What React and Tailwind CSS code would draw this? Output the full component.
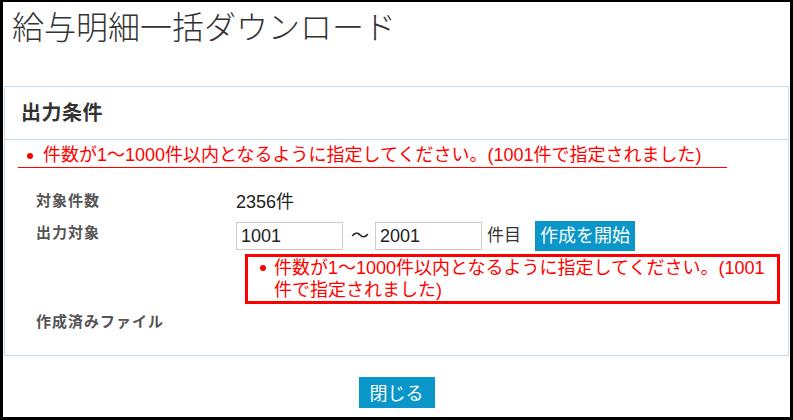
import React from "react";

const FONT = "font-['Liberation_Sans','Noto_Sans_CJK_JP',sans-serif]";
const MESSAGE = "件数が1～1000件以内となるように指定してください。(1001件で指定されました)";

function Field({ label, children, className = "" }) {
  return (
    <div className={`flex items-start ${className}`}>
      <div className="w-[200px] shrink-0 text-[15px] font-bold tracking-[1px] text-[#555] leading-[24px]">
        {label}
      </div>
      <div className="flex-1">{children}</div>
    </div>
  );
}

export default function App() {
  return (
    <div
      className={`w-[793px] h-[420px] overflow-hidden bg-white border-black border-l-[3px] border-r-[3px] border-t-2 border-b-[3px] ${FONT}`}
    >
      {/* Title */}
      <h1 className="h-[84px] pl-[9px] text-[32px] font-light leading-[46px] text-[#333] font-['Noto_Sans_CJK_JP',sans-serif]">
        給与明細一括ダウンロード
      </h1>

      {/* Conditions panel */}
      <section className="mx-px border border-[#c5dbf2]">
        <div className="h-[53px] flex items-center pl-[16px] border-b border-[#c5dbf2]">
          <h2 className="text-[20px] font-bold text-[#333] tracking-[0.5px]">出力条件</h2>
        </div>

        <div className="ml-[13px] w-[709px] pt-[4px] border-b border-[#f00]">
          <div className="flex items-center text-[18px] leading-[23px] text-[#f00]">
            <span className="w-[6px] h-[6px] rounded-full bg-[#f00] ml-[9px] mr-[10px]" />
            <span>{MESSAGE}</span>
          </div>
        </div>

        <div className="pl-[31px] pr-[9px] pt-[21px] pb-[21px]">
          <Field label="対象件数">
            <div className="text-[18px] leading-[26px] text-[#222]">2356件</div>
          </Field>

          <Field label="出力対象" className="mt-[6px]">
            <div className="flex items-center h-[30px] text-[#222]">
              <input
                defaultValue="1001"
                className="w-[107px] h-[28px] border border-[#ccc] px-[4px] text-[18px] outline-none"
              />
              <span className="ml-[8px] mr-[6px] text-[18px]">～</span>
              <input
                defaultValue="2001"
                className="w-[107px] h-[28px] border border-[#ccc] px-[4px] text-[18px] outline-none"
              />
              <span className="ml-[5px] text-[17px] text-[#333]">件目</span>
              <button className="ml-[14px] h-[30px] px-[5px] bg-[#0a96c8] text-white text-[18px]">
                作成を開始
              </button>
            </div>
            <div className="mt-[3px] ml-[9px] w-[535px] border-[3px] border-[#f00] text-[18px] leading-[22px] text-[#f00]">
              <div className="flex items-start pl-[12px] pr-[8px]">
                <span className="mt-[8px] w-[6px] h-[6px] shrink-0 rounded-full bg-[#f00] mr-[8px]" />
                <span>{MESSAGE}</span>
              </div>
            </div>
          </Field>

          <Field label="作成済みファイル" className="mt-[6px]">
            <div className="h-[24px]" />
          </Field>
        </div>
      </section>

      <div className="flex justify-center mt-[21px]">
        <button className="h-[31px] px-[11px] bg-[#0a96c8] text-white text-[18px] font-['Noto_Sans_CJK_JP',sans-serif]">
          閉じる
        </button>
      </div>
    </div>
  );
}
